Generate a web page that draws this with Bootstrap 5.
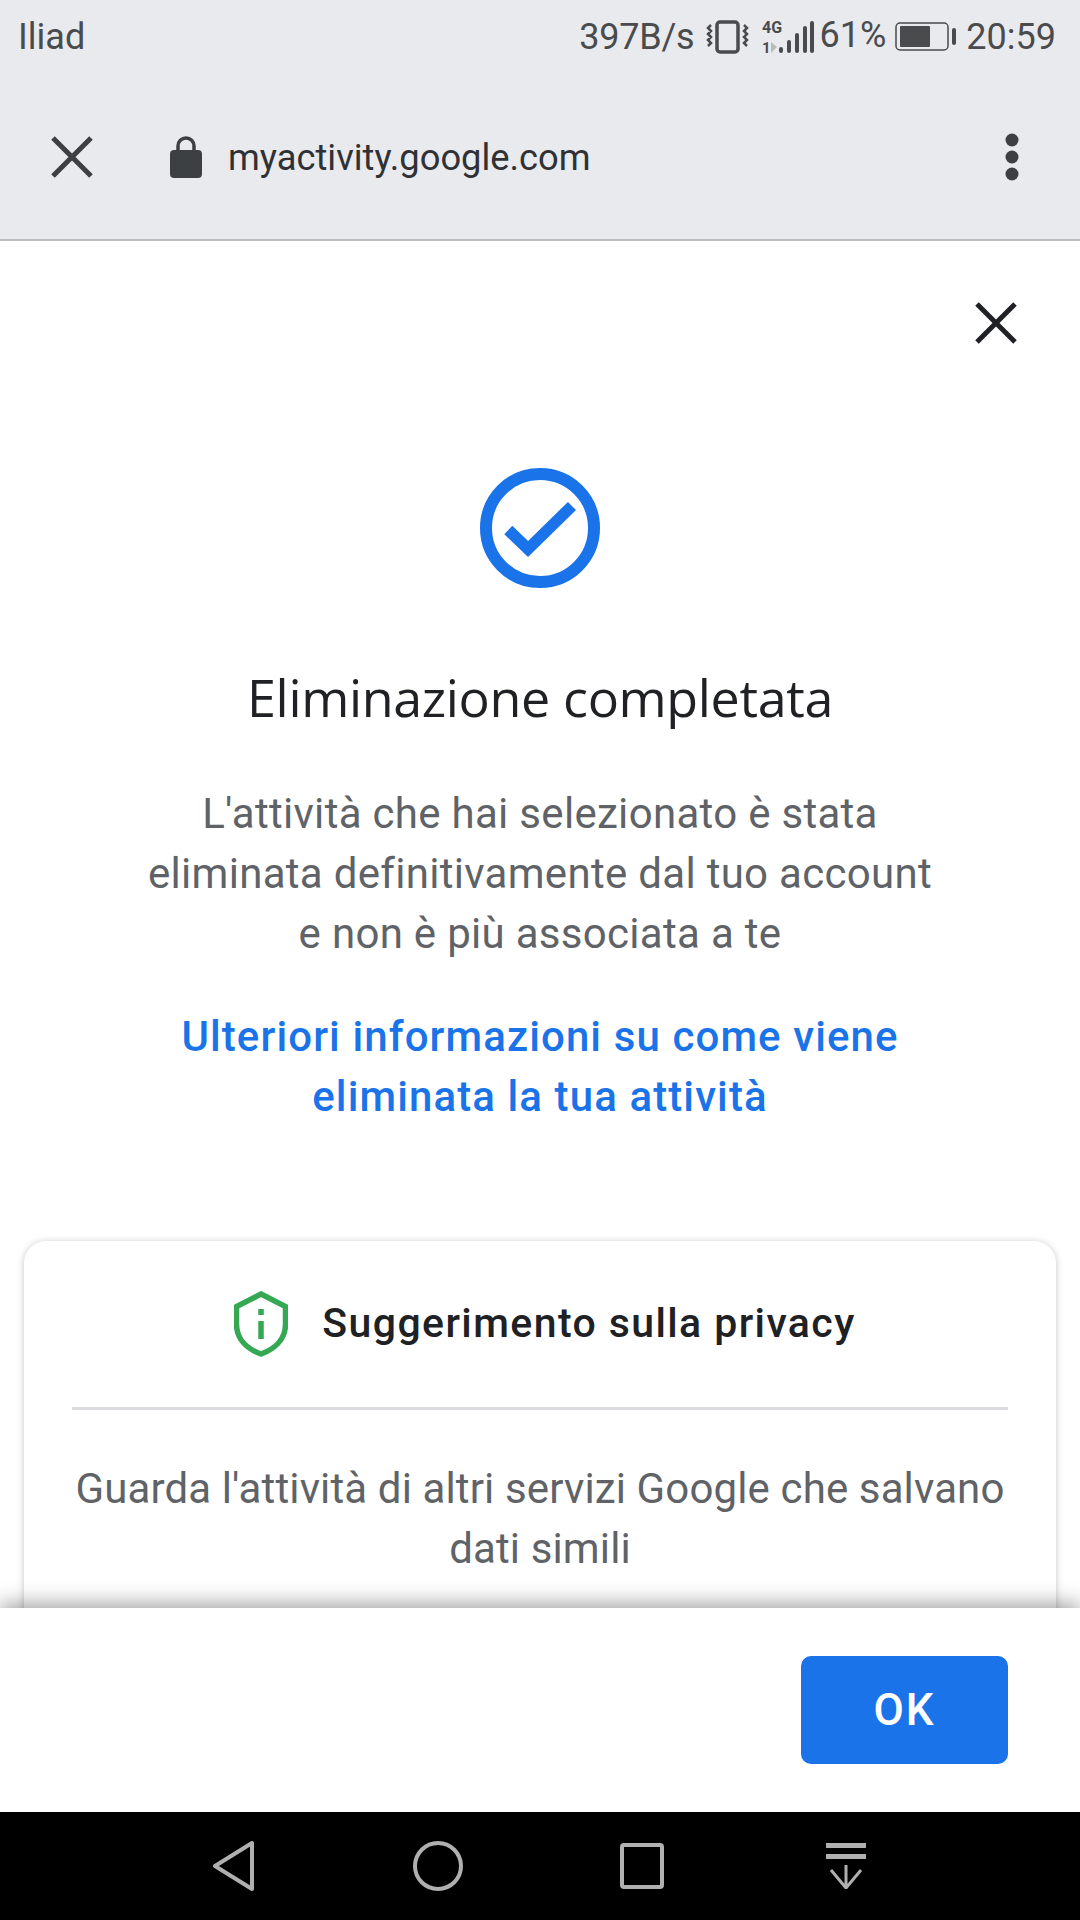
<!DOCTYPE html>
<html lang="it">
<head>
    <meta charset="UTF-8">
    <title>Eliminazione completata</title>
    <meta name="viewport" content="width=device-width, initial-scale=1">
    <link href="https://cdn.jsdelivr.net/npm/bootstrap@5.3.3/dist/css/bootstrap.min.css" rel="stylesheet">
    <style>
        html, body { margin: 0; background: #fff; }
        body { font-family: Roboto, "Liberation Sans", sans-serif; color: #5f6368; }
        .phone { width: 1080px; height: 1920px; overflow: hidden; }
        .chrome-top { background: #e8eaed; height: 241px; border-bottom: 2px solid #bdbdbd; color: #3c4043; flex: none; }
        .status-row { height: 74px; padding: 0 24px 0 18px; font-size: 36px; color: #4a4b4d; }
        .status-right { gap: 9px; }
        .vib-icon { margin-right: 3px; }
        .speed-text { letter-spacing: -.2px; margin-right: 2px; }
        .batt-pct { margin: -4px 0 0 -3px; }
        .url-row { height: 166px; padding: 0 61px 0 50px; }
        .url-text { font-size: 36.3px; margin-left: 26px; padding-top: 3px; color: #2f3134; }
        .lock-icon { margin-left: 76px; }
        .page-main { min-height: 0; padding: 0 24px; }
        .close-row { height: 227px; padding: 0 39px 63px 0; }
        .done-title { font-family: "Open Sans", Roboto, sans-serif; font-size: 52px; font-weight: 400; color: #202124; line-height: 60px; margin: 79px 0 0; letter-spacing: -.35px; }
        .done-text { font-size: 42px; line-height: 60px; margin: 57px 0 0; letter-spacing: .3px; }
        .info-link { display: block; color: #1a73e8; font-size: 42px; line-height: 60px; font-weight: 500; margin-top: 43px; text-decoration: none; letter-spacing: 1.1px; }
        .tip-card { margin-top: 114px; border: 0; border-radius: 22px; box-shadow: 0 1px 7px rgba(60, 64, 67, .3); padding: 0 48px; height: 560px; }
        .tip-head { height: 169px; gap: 34px; padding-left: 10px; border-bottom: 3px solid #dadce0; }
        .tip-title { font-size: 41px; font-weight: 500; color: #202124; letter-spacing: 1.4px; }
        .tip-text { font-size: 42px; line-height: 60px; margin: 49px 0 0; letter-spacing: .13px; }
        .action-bar { height: 204px; padding: 48px 72px 0 0; background: #fff; box-shadow: 0 -4px 20px rgba(0, 0, 0, .38); position: relative; flex: none; }
        .ok-btn { width: 207px; height: 108px; background: #1a73e8; border: 0; border-radius: 10px; font-size: 44px; font-weight: 500; letter-spacing: 2px; color: #fff; padding: 0; }
        .soft-nav { height: 108px; background: #000; flex: none; position: relative; }
        .nav-slot { width: 204px; }
    </style>
</head>
<body>
    <div class="phone d-flex flex-column">
        <header class="chrome-top">
            <div class="status-row d-flex align-items-center justify-content-between">
                <span>Iliad</span>
                <div class="status-right d-flex align-items-center">
                    <span class="speed-text">397B/s</span>
                    <svg class="vib-icon" width="44" height="34" viewBox="0 0 44 34" fill="none" stroke="#4a4b4d">
                        <rect x="11" y="2" width="21" height="30" rx="3" stroke-width="3.5"/>
                        <path d="M5 5l-3 3 3 3-3 3 3 3-3 3 3 3-3 3M38 5l3 3-3 3 3 3-3 3 3 3-3 3 3 3" stroke-width="2.5"/>
                    </svg>
                    <svg width="52" height="44" viewBox="0 0 52 44" fill="#4a4b4d">
                        <text x="0" y="18" font-family="Roboto" font-size="16" font-weight="700">4G</text>
                        <text x="0" y="38" font-family="Roboto" font-size="15" font-weight="700">1</text>
                        <path d="M9 27l6 5-6 6z" fill="#bbb"/>
                        <rect x="17" y="32" width="4" height="6" rx="2"/>
                        <rect x="25" y="25" width="4" height="13" rx="2"/>
                        <rect x="33" y="18" width="4" height="20" rx="2"/>
                        <rect x="41" y="11" width="4" height="27" rx="2"/>
                        <rect x="48" y="6" width="4" height="32" rx="2"/>
                    </svg>
                    <span class="batt-pct">61%</span>
                    <svg width="62" height="30" viewBox="0 0 62 30" fill="#4a4b4d">
                        <rect x="1" y="1" width="52" height="27" rx="4" fill="none" stroke="#4a4b4d" stroke-width="1.5"/>
                        <rect x="5" y="4" width="30" height="21" rx="1"/>
                        <rect x="57" y="6" width="4" height="17" rx="2"/>
                    </svg>
                    <span>20:59</span>
                </div>
            </div>
            <div class="url-row d-flex align-items-center">
                <svg width="44" height="44" viewBox="0 0 44 44" stroke="#3c4043" stroke-width="5" fill="none"><path d="M3 3l38 38M41 3L3 41"/></svg>
                <svg class="lock-icon" width="32" height="42" viewBox="0 0 32 42" fill="#3c4043">
                    <path d="M8 16V10a8 8 0 0 1 16 0v6" fill="none" stroke="#3c4043" stroke-width="3.5"/>
                    <rect x="0" y="14" width="32" height="28" rx="4"/>
                </svg>
                <span class="url-text">myactivity.google.com</span>
                <svg class="ms-auto" width="14" height="48" viewBox="0 0 14 48" fill="#3c4043"><circle cx="7" cy="7" r="6.5"/><circle cx="7" cy="24" r="6.5"/><circle cx="7" cy="41" r="6.5"/></svg>
            </div>
        </header>

        <main class="page-main flex-grow-1 text-center overflow-hidden">
            <div class="close-row d-flex align-items-center justify-content-end">
                <svg width="42" height="42" viewBox="0 0 42 42" stroke="#202124" stroke-width="5" fill="none"><path d="M2 2l38 38M40 2L2 40"/></svg>
            </div>
            <svg class="d-block mx-auto" width="120" height="120" viewBox="0 0 120 120" fill="none" stroke="#1a73e8" stroke-width="12">
                <circle cx="60" cy="60" r="54"/>
                <path d="M28.3 62L48 81l44-43" stroke-width="11.5"/>
            </svg>
            <h1 class="done-title">Eliminazione completata</h1>
            <p class="done-text">L'attività che hai selezionato è stata<br>eliminata definitivamente dal tuo account<br>e non è più associata a te</p>
            <a class="info-link" href="#">Ulteriori informazioni su come viene<br>eliminata la tua attività</a>
            <section class="card tip-card">
                <div class="tip-head d-flex align-items-center justify-content-center">
                    <svg width="54" height="66" viewBox="0 0 54 66" fill="none" stroke="#34a853" stroke-width="5.5">
                        <path d="M27 3L51.5 15.5V33C51.5 48 41 58 27 63 13 58 2.500 48 2.500 33V15.500Z"/>
                        <path d="M27 18v6M27 30v18"/>
                    </svg>
                    <span class="tip-title">Suggerimento sulla privacy</span>
                </div>
                <p class="tip-text">Guarda l'attività di altri servizi Google che salvano dati simili</p>
            </section>
        </main>

        <div class="action-bar d-flex justify-content-end align-items-start">
            <button type="button" class="btn ok-btn">OK</button>
        </div>

        <nav class="soft-nav d-flex justify-content-center align-items-center">
            <div class="nav-slot text-center">
                <svg width="44" height="50" viewBox="0 0 44 50" fill="none" stroke="#b0b0b0" stroke-width="4" stroke-linejoin="round"><path d="M40 2v46L3 25z"/></svg>
            </div>
            <div class="nav-slot text-center">
                <svg width="50" height="50" viewBox="0 0 50 50" fill="none" stroke="#b0b0b0" stroke-width="4"><circle cx="25" cy="25" r="23"/></svg>
            </div>
            <div class="nav-slot text-center">
                <svg width="44" height="46" viewBox="0 0 44 46" fill="none" stroke="#b0b0b0" stroke-width="4"><rect x="2" y="2" width="40" height="42" rx="2"/></svg>
            </div>
            <div class="nav-slot text-center">
                <svg width="40" height="46" viewBox="0 0 40 46" fill="none" stroke="#b0b0b0"><path d="M0 2.500h40M0 13.500h40" stroke-width="5"/><path d="M20 22v23M5 27l15 18 15-18" stroke-width="3"/></svg>
            </div>
        </nav>
    </div>
    <script src="https://cdn.jsdelivr.net/npm/bootstrap@5.3.3/dist/js/bootstrap.bundle.min.js"></script>
</body>
</html>
